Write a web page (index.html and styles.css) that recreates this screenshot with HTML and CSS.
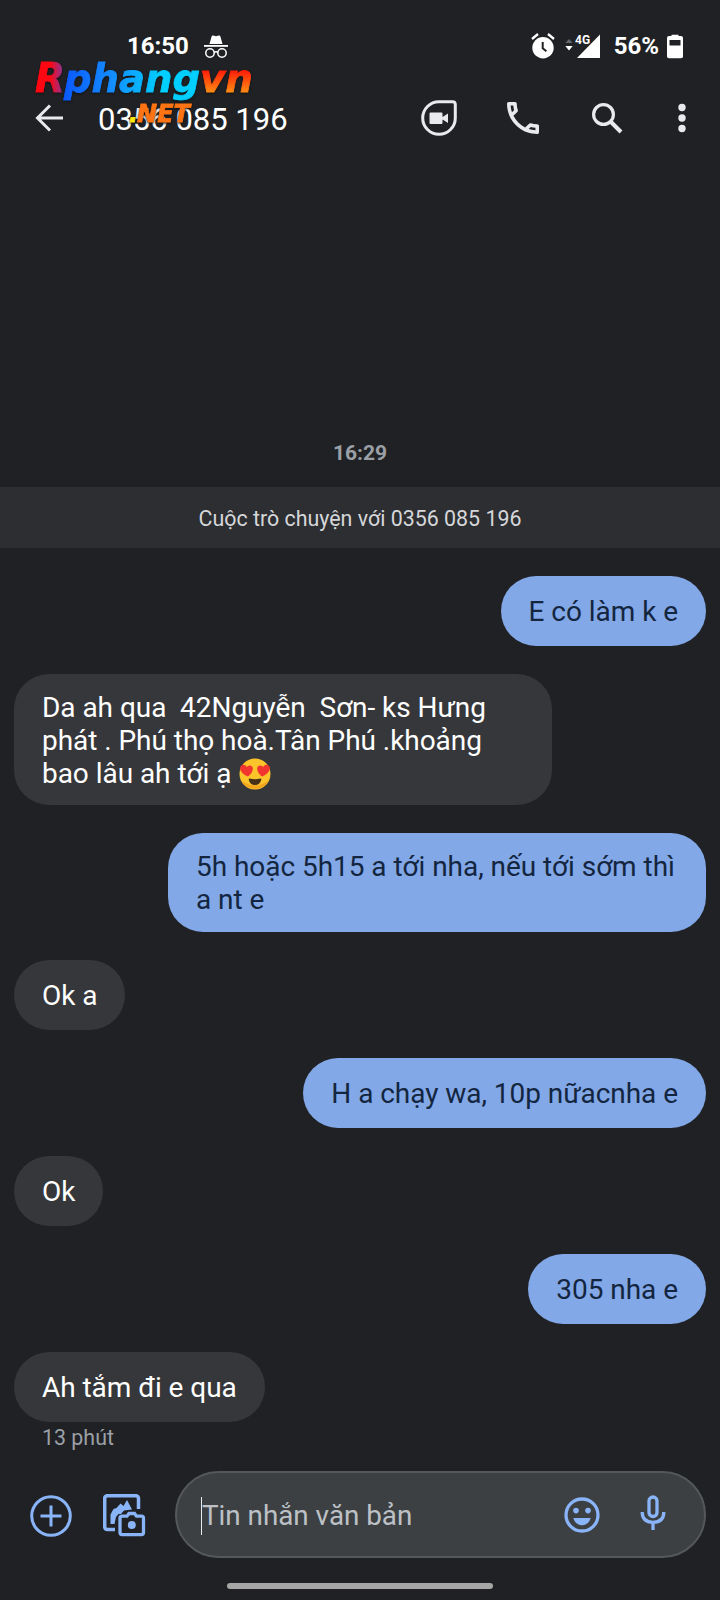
FILE: index.html
```html
<!DOCTYPE html>
<html lang="vi">
<head>
<meta charset="utf-8">
<title>0356 085 196</title>
<link rel="stylesheet" href="styles.css">
</head>
<body>
<div class="screen">
  <div class="statusbar">
    <div class="status-left">
      <span class="clock">16:50</span>
      <svg class="incognito" width="24" height="23" viewBox="0 0 24 23" fill="#fff">
        <path d="M5.500 9 7.600 1.600Q8 .2 9.400.6L12 1.300 14.600.6Q16 .2 16.400 1.600L18.500 9z"/>
        <rect y="10" width="24" height="1.800"/>
        <g fill="none" stroke="#fff" stroke-width="1.500"><circle cx="6" cy="18" r="4.200"/><circle cx="18" cy="18" r="4.200"/><path d="M10 17.600q2-1.600 4 0"/></g>
      </svg>
    </div>
    <div class="status-right">
      <svg width="24" height="26" viewBox="0 0 24 26">
        <circle cx="12" cy="14.700" r="10.700" fill="#fff"/>
        <path d="M1 6 7 1M23 6 17 1" stroke="#fff" stroke-width="2.300"/>
        <path d="M11.700 9v6.300l3.700 3" fill="none" stroke="#202124" stroke-width="2"/>
      </svg>
      <svg class="signal" width="36" height="26" viewBox="0 0 36 26">
        <path d="M.3 10 4 6l3.700 4z" fill="#66676a"/>
        <path d="M.3 13 4 17.500 7.700 13z" fill="#fff"/>
        <path d="M12 25 35 1.500V25z" fill="#fff"/>
        <text x="10" y="10.500" class="net">4G</text>
      </svg>
      <span class="percent">56%</span>
      <svg class="battery" width="16" height="25" viewBox="0 0 16 25">
        <path fill="#fff" fill-rule="evenodd" d="M4.500 2V.7h7V2H14q2 0 2 2v18.500q0 1.800-2 1.800H2q-2 0-2-1.800V4q0-2 2-2zM2.500 6v5.500h11V6z"/>
      </svg>
    </div>
  </div>
  <div class="appbar">
    <svg class="back" width="28" height="28" viewBox="0 0 28 28" fill="none" stroke="#e8eaed" stroke-width="3"><path d="M28 14H2.500M15 1.500 2.500 14 15 26.500"/></svg>
    <h1 class="title">0356 085 196</h1>
    <div class="actions">
      <svg width="36" height="36" viewBox="0 0 36 36">
        <path d="M18 1.700H31.500Q34.300 1.700 34.300 4.500V18A16.300 16.300 0 1 1 18 1.700z" fill="none" stroke="#e8eaed" stroke-width="3"/>
        <path d="M9.500 12.500H20.500q1 0 1 1v3.400l5.500-3.500v9.700l-5.500-3.500v3.400q0 1-1 1H9.500q-1 0-1-1v-9.500q0-1 1-1z" fill="#e8eaed"/>
      </svg>
      <svg class="call" width="32" height="32" viewBox="3 3 18 18" fill="#e8eaed"><path d="M6.540 5c.06.89.21 1.760.45 2.590l-1.200 1.200c-.41-1.200-.67-2.470-.76-3.790h1.510m9.860 12.020c.85.24 1.720.39 2.600.45v1.490c-1.320-.09-2.590-.35-3.800-.75l1.200-1.190M7.500 3H4c-.55 0-1 .45-1 1 0 9.390 7.610 17 17 17 .55 0 1-.45 1-1v-3.490c0-.55-.45-1-1-1-1.240 0-2.450-.2-3.570-.57-.37-.12-.77-.02-1.020.24l-2.200 2.200c-2.830-1.450-5.150-3.760-6.590-6.590l2.200-2.200c.28-.28.36-.67.25-1.020C8.700 6.450 8.500 5.250 8.500 4c0-.55-.45-1-1-1z"/></svg>
      <svg class="search" width="31" height="31" viewBox="0 0 31 31" fill="none" stroke="#e8eaed"><circle cx="11.500" cy="11.500" r="9.900" stroke-width="3.200"/><path d="M18.500 18.500 29 29" stroke-width="4"/></svg>
      <svg class="more" width="8" height="30" viewBox="0 0 8 30" fill="#e8eaed"><circle cx="4" cy="4.500" r="3.700"/><circle cx="4" cy="15" r="3.700"/><circle cx="4" cy="25.500" r="3.700"/></svg>
    </div>
  </div>

  <svg class="watermark" width="224" height="74" viewBox="0 0 224 74">
    <defs>
      <linearGradient id="lr" x1="0" x2="1"><stop offset=".5" stop-color="#ff0712"/><stop offset="1" stop-color="#7a3aa8"/></linearGradient>
      <linearGradient id="lb" gradientUnits="userSpaceOnUse" x1="30" x2="130" y1="0" y2="0"><stop offset="0" stop-color="#0a55ff"/><stop offset=".5" stop-color="#148cff"/><stop offset="1" stop-color="#00cfff"/></linearGradient>
      <linearGradient id="lo" gradientUnits="userSpaceOnUse" x1="0" x2="0" y1="14" y2="36"><stop offset="0" stop-color="#ff1a08"/><stop offset="1" stop-color="#ff8a12"/></linearGradient>
    </defs>
    <g class="mark">
      <text x="4" y="35.500" font-size="40" textLength="30" lengthAdjust="spacingAndGlyphs" fill="url(#lr)" stroke="url(#lr)">R</text>
      <text x="33" y="35.500" font-size="39" textLength="136" lengthAdjust="spacingAndGlyphs" fill="url(#lb)" stroke="url(#lb)">phang</text>
      <text x="169" y="35.500" font-size="39" textLength="53" lengthAdjust="spacingAndGlyphs" fill="url(#lo)" stroke="url(#lo)">vn</text>
      <text x="98" y="65.500" font-size="24" fill="#ffe80a" stroke="#ffe80a">.</text>
      <text x="106" y="65.500" font-size="25" textLength="53" lengthAdjust="spacingAndGlyphs" fill="#ff7412" stroke="#ff7412">NET</text>
    </g>
  </svg>

  <main class="thread">
    <div class="stamp">16:29</div>
    <div class="notice">Cuộc trò chuyện với 0356 085 196</div>
    <div class="messages">
      <div class="bubble out"><span>E có làm k e</span></div>
      <div class="bubble in wide"><span>Da ah qua&nbsp; 42Nguyễn&nbsp; Sơn- ks Hưng<br>phát . Phú thọ hoà.Tân Phú .khoảng<br>bao lâu ah tới ạ <svg class="emoji" width="32" height="32" viewBox="0 0 32 32" role="img" aria-label="😍">
        <circle cx="16" cy="16" r="15.500" fill="#fcc42b"/><path d="M2 22a15.500 15.500 0 0 0 28 0q-14 11-28 0z" fill="#f2a51d"/>
        <path d="M8.800 18.500C4 16.500-.2 12.500 1.500 8.500 3 5.800 6.500 6.200 7.800 9.100 10 6.500 13.500 7.300 13.800 10.300 14 14 11 16.800 8.800 18.500z" fill="#f1352f"/>
        <path d="M23.200 18.500C28 16.500 32.200 12.500 30.500 8.500 29 5.800 25.500 6.200 24.200 9.100 22 6.500 18.500 7.300 18.200 10.300 18 14 21 16.800 23.200 18.500z" fill="#f1352f"/>
        <path d="M10.500 20.500q5.500 1.500 11 0 1 0 .7 1.500Q21 27 16 27t-6.200-5q-.3-1.500.7-1.500z" fill="#473018"/>
      </svg></span></div>
      <div class="bubble out wide"><span>5h hoặc 5h15 a tới nha, nếu tới sớm thì<br>a nt e</span></div>
      <div class="bubble in"><span>Ok a</span></div>
      <div class="bubble out"><span>H a chạy wa, 10p nữacnha e</span></div>
      <div class="bubble in"><span>Ok</span></div>
      <div class="bubble out"><span>305 nha e</span></div>
      <div class="bubble in"><span>Ah tắm đi e qua</span></div>
    </div>
    <div class="sent-time">13 phút</div>
  </main>

  <div class="composer">
    <svg class="add" width="42" height="42" viewBox="0 0 42 42" fill="none" stroke="#8ab4f8" stroke-width="3"><circle cx="21" cy="21" r="19.300"/><path d="M21 10.500v21M10.500 21h21"/></svg>
    <svg class="gallery" width="43" height="43" viewBox="0 0 43 43" fill="none" stroke="#8ab4f8" stroke-width="3.500">
      <path d="M35.500 15V4.500q0-2.800-2.800-2.800H4.500Q1.700 1.700 1.700 4.500v28.200q0 2.800 2.800 2.800H12"/>
      <path d="M7.500 30V20.500L10.500 15l3-1 4-4.500L20.500 12l3.500-6 5 9.500-8 1-3 3.500h-2.500l-2.500 3-1.500 7z" fill="#8ab4f8" stroke="none"/>
      <path d="M19 22.200h5l2-2.700h5.500l2 2.700h5q2 0 2 2v14.400q0 2-2 2H19q-2 0-2-2V24.200q0-2 2-2z" stroke-width="3.300"/>
      <circle cx="28.800" cy="31" r="4" fill="#8ab4f8" stroke="none"/>
    </svg>
    <div class="field">
      <span class="placeholder">Tin nhắn văn bản</span>
      <svg class="smile" width="36" height="36" viewBox="0 0 36 36" fill="#8ab4f8"><circle cx="18" cy="18" r="16" fill="none" stroke="#8ab4f8" stroke-width="3.300"/><circle cx="12" cy="13.600" r="2.800"/><circle cx="24" cy="13.600" r="2.800"/><path d="M9.300 21h17.400q-2 7.200-8.700 7.200T9.300 21z"/></svg>
      <svg class="mic" width="26" height="36" viewBox="0 0 26 36" fill="none" stroke="#8ab4f8" stroke-width="3.300"><rect x="9" y="2" width="8" height="19.500" rx="4"/><path d="M2.200 17q0 10.300 10.800 10.300T23.800 17M13 27v8"/></svg>
    </div>
  </div>
  <div class="homebar"></div>
</div>
</body>
</html>
```
FILE: styles.css
```css
* { box-sizing: border-box; }
body {
  margin: 0;
  background: #202124;
  color: #fff;
  font-family: Roboto, "Noto Sans", sans-serif;
}
svg { display: block; flex: none; }
.screen {
  position: relative;
  width: 720px;
  height: 1600px;
  overflow: hidden;
  display: flex;
  flex-direction: column;
}
.statusbar {
  height: 60px;
  padding: 32px 37px 0 127px;
  display: flex;
  justify-content: space-between;
  font-size: 24px;
  font-weight: 700;
  line-height: 27px;
}
.status-left, .status-right { display: flex; align-items: center; }
.status-left { gap: 15px; height: 28px; }
.status-right { height: 28px; }
.signal { margin-left: 10px; }
.net { font-size: 12px; font-weight: 700; fill: #fff; }
.percent { margin: 0 8px 0 13px; }
.appbar {
  height: 115px;
  padding: 0 34px 0 35px;
  display: flex;
  align-items: flex-start;
}
.back { margin-top: 44px; }
.title {
  margin: 40px 0 0 35px;
  font-size: 31px;
  font-weight: 400;
  line-height: 40px;
  white-space: nowrap;
}
.actions {
  margin: 40px 0 0 auto;
  display: flex;
  align-items: center;
  height: 36px;
}
.call { margin-left: 50px; }
.search { margin-left: 53px; }
.more { margin-left: 55px; }
.watermark { position: absolute; left: 31px; top: 56px; }
.mark {
  font-family: "DejaVu Sans", sans-serif;
  font-weight: 700;
  font-style: italic;
  stroke-width: .8px;
  filter: drop-shadow(0 1px 1px #101114);
}
.thread { display: flex; flex-direction: column; height: 1296px; padding-top: 262px; }
.stamp {
  height: 50px;
  text-align: center;
  color: #9aa0a6;
  font-size: 21px;
  font-weight: 700;
  line-height: 32px;
}
.notice {
  height: 61px;
  background: #2d2e31;
  color: #d5d7da;
  text-align: center;
  font-size: 21.400px;
  line-height: 63px;
}
.messages {
  display: flex;
  flex-direction: column;
  gap: 28px;
  padding: 28px 14px 0;
}
.bubble {
  display: flex;
  align-items: center;
  min-height: 70px;
  padding: 18.200px 28px 14.300px;
  border-radius: 35px;
  font-size: 28px;
  letter-spacing: -.045px;
  line-height: 32.900px;
  white-space: nowrap;
}
.in { align-self: flex-start; background: #36373a; color: #fff; }
.out { align-self: flex-end; background: #82a8e7; color: #14263f; }
.wide { width: 538px; }
.emoji { display: inline-block; vertical-align: -6px; margin: -4px 0; position: relative; top: -3px; left: 1px; }
.sent-time {
  padding: 2px 42px;
  color: #9aa0a6;
  font-size: 21.400px;
  line-height: 28px;
}
.composer {
  height: 87px;
  padding: 0 14px 0 30px;
  display: flex;
  align-items: center;
}
.add { margin-top: 2px; }
.gallery { margin: 2px 0 0 31px; }
.field {
  flex: 1;
  margin-left: 29px;
  height: 87px;
  border: 2px solid #55585b;
  border-radius: 44px;
  background: #3c4043;
  display: flex;
  align-items: center;
  padding: 0 38px 0 24px;
}
.placeholder {
  border-left: 1px solid #e8eaed;
  font-size: 27.800px;
  line-height: 38px;
  margin-top: 2px;
  color: #bdc1c6;
}
.smile { margin-left: auto; }
.mic { margin: -4px 0 0 40px; }
.homebar {
  width: 266px;
  height: 6px;
  margin: 25px auto 0;
  border-radius: 3px;
  background: #a6a6a7;
}
```
